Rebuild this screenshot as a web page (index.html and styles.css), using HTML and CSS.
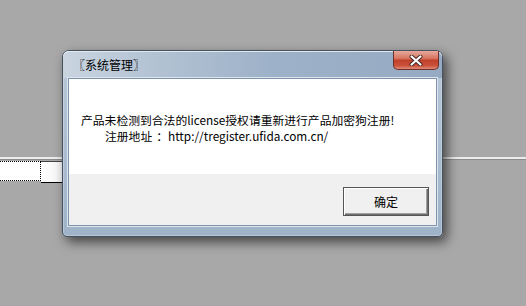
FILE: index.html
```html
<!DOCTYPE html>
<html lang="zh-CN">
    <head>
        <meta charset="UTF-8">
        <title>系统管理</title>
        <link rel="stylesheet" href="styles.css">
    </head>
    <body>
        <div class="backdrop">
            <div class="rule"></div>
            <div class="field-row">
                <div class="field-cell focus"></div>
                <div class="field-cell"></div>
            </div>
        </div>

        <div class="window">
            <div class="titlebar">
                <span class="title">〖系统管理〗</span>
                <button class="close-btn" aria-label="关闭">
                    <svg width="14" height="11" viewBox="0 0 14 11">
                        <path d="M2.5 1.5 L11.5 9.5 M11.5 1.5 L2.5 9.5" stroke="#3a2420" stroke-width="4" stroke-linecap="round"/>
                        <path d="M2.5 1.5 L11.5 9.5 M11.5 1.5 L2.5 9.5" stroke="#fff" stroke-width="2.2" stroke-linecap="round"/>
                    </svg>
                </button>
            </div>
            <div class="client">
                <div class="message">
                    <p>产品未检测到合法的license授权请重新进行产品加密狗注册!</p>
                    <p class="indent">注册地址<span class="colon">：</span>http://tregister.ufida.com.cn/</p>
                </div>
                <div class="footer">
                    <button class="ok-btn">确定</button>
                </div>
            </div>
        </div>
    </body>
</html>
```

FILE: styles.css
```css
html, body {
    margin: 0;
    height: 100%;
}

body {
    background-color: #a8a8a8;
    font-family: "Noto Sans CJK SC", "Noto Sans", sans-serif;
    font-size: 11.8px;
    color: #000;
    overflow: hidden;
}

/* the app behind the dialog */
.backdrop {
    padding-top: 157px;
}

.rule {
    height: 2px;
    background-color: #ececec;
    border-bottom: 1px solid #8c8c8c;
}

.field-row {
    display: flex;
    margin-top: 1px;
}

.field-cell {
    width: 21px;
    height: 20px;
    background: linear-gradient(to right, #fff, #f4f4f4);
    border-top: 1px solid #444;
    border-bottom: 1px solid #000;
}

.field-cell.focus {
    width: 39px;
    height: 18px;
    background: #fff;
    border: 1px dotted #000;
    border-left: none;
    padding-left: 1px;
}

/* dialog */
.window {
    position: absolute;
    left: 62px;
    top: 50px;
    width: 379px;
    height: 185px;
    border: 1px solid #46525e;
    border-radius: 7px 7px 5px 5px;
    background: linear-gradient(to bottom, #b9c8d8, #a9bccf 60%, #9fb3c8);
    box-shadow: 0 0 0 1px rgba(255, 255, 255, 0.25) inset, 4px 5px 12px rgba(0, 0, 0, 0.6);
    display: flex;
    flex-direction: column;
}

.titlebar {
    height: 27px;
    display: flex;
    align-items: flex-start;
    justify-content: space-between;
    padding: 0 3px 0 10px;
    border-radius: 6px 6px 0 0;
    background: linear-gradient(to right, #c9d4df 0%, #b2c2d3 25%, #9db1c8 55%, #96abc3 100%);
    box-shadow: 0 1px 0 #e2e9f0 inset;
}

.title {
    margin-top: 6px;
    font-size: 12px;
    line-height: 16px;
}

.close-btn {
    width: 46px;
    height: 19px;
    padding: 0;
    border: 1px solid #6e3127;
    border-top: none;
    border-radius: 0 0 5px 5px;
    background: linear-gradient(to bottom, #e7a99b 0%, #d77764 40%, #c2412a 52%, #c9503a 80%, #e08a76 100%);
    display: flex;
    align-items: center;
    justify-content: center;
}

.client {
    flex: 1;
    margin: 0 5px 10px 5px;
    border: 1px solid #7d93ab;
    box-shadow: 0 0 0 1px #dde6ef;
    display: flex;
    flex-direction: column;
}

.message {
    height: 95px;
    background-color: #fff;
    padding: 33px 0 0 12px;
    box-sizing: border-box;
}

.message p {
    margin: 0;
    line-height: 16px;
}

.message .indent {
    padding-left: 24px;
}

.message .colon {
    padding-left: 4px;
}

.footer {
    flex: 1;
    background-color: #f0f0f0;
    display: flex;
    justify-content: flex-end;
    align-items: flex-start;
    padding: 13px 7px 0 0;
}

.ok-btn {
    width: 86px;
    height: 29px;
    border: 1px solid #555;
    background-color: #f0f0f0;
    box-shadow: inset 1px 1px #fff, inset -1px -1px #6e6e6e, inset -2px -2px #a0a0a0;
    font-family: inherit;
    font-size: 12px;
    color: #000;
    padding: 0;
}
```
